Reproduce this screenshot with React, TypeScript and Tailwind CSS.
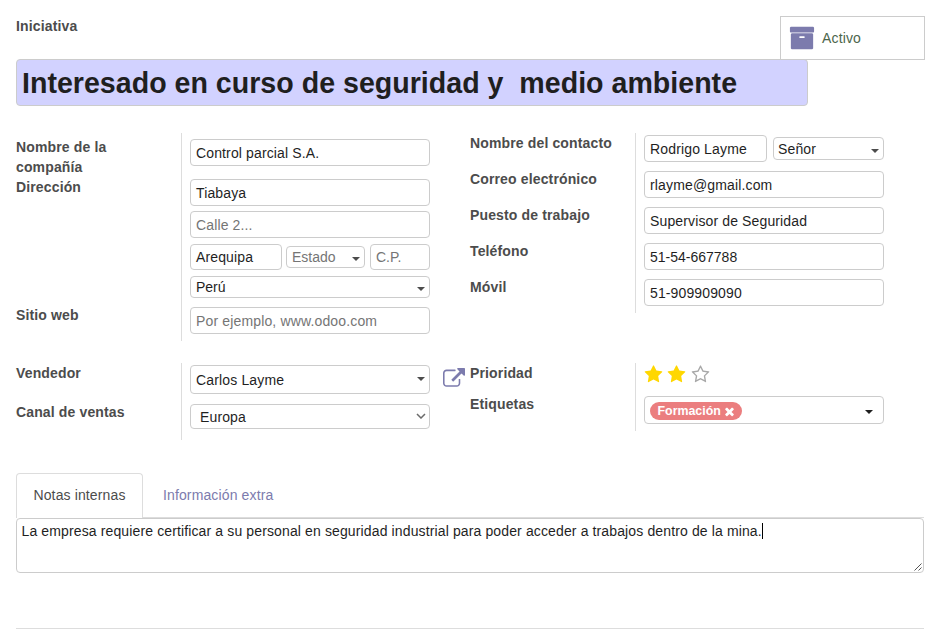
import React from "react";

type FieldProps = { className?: string; children: React.ReactNode };

const ICONS = {
  archive:
    "M1088 832q0-26-19-45t-45-19h-256q-26 0-45 19t-19 45 19 45 45 19h256q26 0 45-19t19-45zm576-192v960q0 26-19 45t-45 19h-1408q-26 0-45-19t-19-45v-960q0-26 19-45t45-19h1408q26 0 45 19t19 45zm64-448v256q0 26-19 45t-45 19h-1536q-26 0-45-19t-19-45v-256q0-26 19-45t45-19h1536q26 0 45 19t19 45z",
  external:
    "M1408 928v320q0 119-84.5 203.5t-203.5 84.5h-832q-119 0-203.5-84.5t-84.5-203.5v-832q0-119 84.5-203.5t203.5-84.5h704q14 0 23 9t9 23v64q0 14-9 23t-23 9h-704q-66 0-113 47t-47 113v832q0 66 47 113t113 47h832q66 0 113-47t47-113v-320q0-14 9-23t23-9h64q14 0 23 9t9 23zm384-864v512q0 26-19 45t-45 19-45-19l-176-176-652 652q-10 10-23 10t-23-10l-114-114q-10-10-10-23t10-23l652-652-176-176q-19-19-19-45t19-45 45-19h512q26 0 45 19t19 45z",
  star: "M1728 647q0 22-26 48l-363 354 86 500q1 7 1 20 0 21-10.5 35.5t-30.5 14.5q-19 0-40-12l-449-236-449 236q-22 12-40 12-21 0-31.5-14.5t-10.5-35.5q0-6 2-20l86-500-364-354q-25-27-25-48 0-37 56-46l502-73 225-455q19-41 49-41t49 41l225 455 502 73q56 9 56 46z",
  starOutline:
    "M1201 1004l306-297-422-62-189-382-189 382-422 62 306 297-73 421 378-199 377 199zm527-357q0 22-26 48l-363 354 86 500q1 7 1 20 0 50-41 50-19 0-40-12l-449-236-449 236q-22 12-40 12-21 0-31.5-14.5t-10.5-35.5q0-6 2-20l86-500-364-354q-25-27-25-48 0-37 56-46l502-73 225-455q19-41 49-41t49 41l225 455 502 73q56 9 56 46z",
  times:
    "M1490 1322q0 40-28 68l-136 136q-28 28-68 28t-68-28l-294-294-294 294q-28 28-68 28t-68-28l-136-136q-28-28-28-68t28-68l294-294-294-294q-28-28-28-68t28-68l136-136q28-28 68-28t68 28l294 294 294-294q28-28 68-28t68 28l136 136q28 28 28 68t-28 68l-294 294 294 294q28 28 28 68z",
};

function Icon({ name, className }: { name: keyof typeof ICONS; className: string }) {
  return (
    <svg viewBox="0 0 1792 1792" fill="currentColor" className={`shrink-0 ${className}`}>
      <path d={ICONS[name]} />
    </svg>
  );
}

function Field({ className = "h-[27px]", children }: FieldProps) {
  return (
    <div className={`flex shrink-0 items-center rounded-[4px] border border-[#ccc] bg-white px-[5px] text-[#1f1f1f] ${className}`}>
      {children}
    </div>
  );
}

function Caret({ className = "text-[#4c4c4c]" }: { className?: string }) {
  return (
    <svg viewBox="0 0 8 4" fill="currentColor" className={`ml-auto h-1 w-2 shrink-0 ${className}`}>
      <path d="M0 0h8L4 4z" />
    </svg>
  );
}

function Label({ className = "", children }: FieldProps) {
  return <div className={`font-bold leading-5 tracking-[0.14px] text-[#4c4c4c] ${className}`}>{children}</div>;
}

export default function App() {
  return (
    <main className="h-[643px] w-[939px] overflow-hidden bg-white pl-4 pr-[14px] pt-4 font-['Liberation_Sans',Arial,sans-serif] text-[14px] leading-5">
      <header className="flex h-[43px] items-start justify-between">
        <Label>Iniciativa</Label>
        <button className="flex h-11 w-[145px] shrink-0 items-center border border-[#ccc] pl-[7.5px]">
          <Icon name="archive" className="size-[26px] text-[#7c7bad]" />
          <span className="ml-[7.5px] tracking-[0.15px] text-[#4c664c]">Activo</span>
        </button>
      </header>

      <div className="relative flex h-[47px] w-[792px] items-center whitespace-pre rounded-[4px] border border-[#ccc] bg-[#d2d2ff] pl-[5px] text-[28.6px] font-bold text-[#1f1f1f]">
        {"Interesado en curso de seguridad y  medio ambiente"}
      </div>

      <section className="mt-[27px] flex items-start">
        <div className="w-[165px] pt-1">
          <Label className="w-[120px]">Nombre de la compañía</Label>
          <Label>Dirección</Label>
          <Label className="mt-[108px]">Sitio web</Label>
        </div>
        <div className="h-[208px] w-[249px] border-l border-[#ddd] pl-2 pt-[6px]">
          <Field className="h-[27px] tracking-[0.13px]">Control parcial S.A.</Field>
          <Field className="mt-[13px] h-[27px] tracking-[0.13px]">Tiabaya</Field>
          <Field className="mt-[5px] h-[27px]">
            <span className="tracking-[0.13px] text-[#757575]">Calle 2...</span>
          </Field>
          <div className="mt-[6px] flex items-center">
            <Field className="h-[26px] w-[92px] tracking-[0.13px]">Arequipa</Field>
            <Field className="ml-1 h-[22px] w-[79px] pr-1">
              <span className="text-[#757575]">Estado</span>
              <Caret className="mt-1 text-[#4c4c4c]" />
            </Field>
            <Field className="ml-[5px] h-[26px] w-[60px]">
              <span className="text-[#757575]">C.P.</span>
            </Field>
          </div>
          <Field className="mt-[6px] h-[22px] pr-1">
            Perú
            <Caret className="mt-1 text-[#4c4c4c]" />
          </Field>
          <Field className="mt-[9px] h-[27px]">
            <span className="tracking-[0.15px] text-[#757575]">Por ejemplo, www.odoo.com</span>
          </Field>
        </div>

        <div className="ml-10 flex w-[165px] flex-col gap-4">
          <Label>Nombre del contacto</Label>
          <Label>Correo electrónico</Label>
          <Label>Puesto de trabajo</Label>
          <Label>Teléfono</Label>
          <Label>Móvil</Label>
        </div>
        <div className="flex h-[180px] w-[249px] flex-col gap-[9px] border-l border-[#ddd] pl-2 pt-[2px]">
          <div className="flex h-[27px] items-center gap-[6px]">
            <Field className="h-[27px] w-[123px] tracking-[0.15px]">Rodrigo Layme</Field>
            <Field className="h-[23px] w-[111px] pl-1 pr-1 tracking-[0.13px]">
              Señor
              <Caret className="mt-1 text-[#4c4c4c]" />
            </Field>
          </div>
          <Field className="h-[27px] tracking-[0.15px]">rlayme@gmail.com</Field>
          <Field className="h-[27px] tracking-[0.13px]">Supervisor de Seguridad</Field>
          <Field>51-54-667788</Field>
          <Field className="h-[27px] tracking-[0.13px]">51-909909090</Field>
        </div>
      </section>

      <section className="mt-[22px] flex items-start">
        <div className="flex w-[165px] flex-col gap-[19px]">
          <Label>Vendedor</Label>
          <Label>Canal de ventas</Label>
        </div>
        <div className="h-[77px] w-[249px] border-l border-[#ddd] pl-2 pt-[2px]">
          <Field className="h-[29px] pr-1 tracking-[0.15px]">
            Carlos Layme
            <Caret className="mb-[1px] text-[#4c4c4c]" />
          </Field>
          <Field className="mt-[10px] h-[25px] pl-[9px] pr-[3px] tracking-[0.13px]">
            Europa
            <svg viewBox="0 0 10 6" fill="none" stroke="#6b6b6b" strokeWidth="1.5" className="mb-px ml-auto h-[6px] w-[10px]">
              <path d="M1 1l4 4 4-4" />
            </svg>
          </Field>
        </div>
        <div className="w-10 pl-[13px] pt-[5px]">
          <Icon name="external" className="size-[22px] text-[#7c7bad]" />
        </div>
        <div className="flex w-[165px] flex-col gap-[11px]">
          <Label>Prioridad</Label>
          <Label>Etiquetas</Label>
        </div>
        <div className="h-[68px] w-[249px] border-l border-[#ddd] pl-2 pt-[1px]">
          <div className="flex h-5 items-center gap-[4.5px] text-[#ffd700]">
            <Icon name="star" className="-ml-[0.5px] mt-[0.5px] size-[19px]" />
            <Icon name="star" className="mt-[0.5px] size-[19px]" />
            <Icon name="starOutline" className="mt-[0.5px] size-[19px] text-[#a8a8a8]" />
          </div>
          <Field className="mt-3 h-7 pr-[10px]">
            <span className="mt-[2px] flex h-[18px] w-[92px] items-center rounded-full bg-[#eb7e7f] pl-[7.5px] text-[12.4px] font-bold leading-[18px] text-white">
              Formación
              <Icon name="times" className="ml-[2px] mt-px size-[13px]" />
            </span>
            <Caret className="mt-1 text-[#1f1f1f]" />
          </Field>
        </div>
      </section>

      <nav className="mt-[33px] flex h-[45px] w-[908px] border-b border-[#ddd]">
        <div className="flex h-[45px] w-[127px] items-center justify-center rounded-t-[4px] border border-b-0 border-[#ddd] bg-white pb-[2px] tracking-[0.13px] text-[#4c4c4c]">
          Notas internas
        </div>
        <div className="flex items-center pl-5 tracking-[0.13px] text-[#7c7bad]">Información extra</div>
      </nav>
      <div className="relative h-[55px] w-[908px] rounded-[4px] border border-[#ccc] bg-white pl-[4.5px] pt-[2px] text-[#1f1f1f]">
        <div className="flex items-center whitespace-nowrap tracking-[0.128px]">
          La empresa requiere certificar a su personal en seguridad industrial para poder acceder a trabajos dentro de la mina.
          <span className="h-4 w-px bg-black" />
        </div>
        <svg viewBox="0 0 8 8" stroke="#555" className="absolute bottom-[1px] right-[1px] size-2">
          <path d="M.5 7.5l7-7M4.5 7.5l3-3" />
        </svg>
      </div>
      <hr className="mt-[55px] w-[908px] border-t border-[#ddd]" />
    </main>
  );
}
